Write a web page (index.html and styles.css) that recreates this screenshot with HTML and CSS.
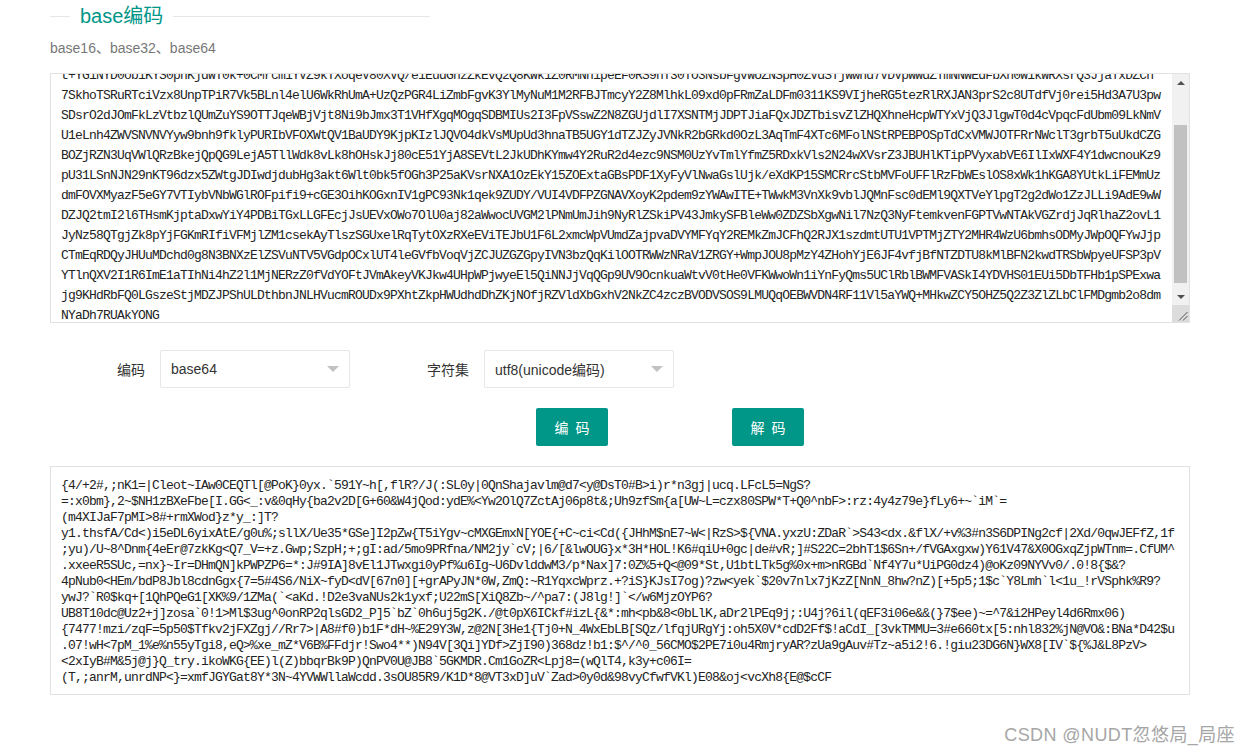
FILE: index.html
```html
<!DOCTYPE html>
<html lang="zh-CN">
<head>
<meta charset="utf-8">
<title>base编码</title>
<link rel="stylesheet" href="styles.css">
</head>
<body>
<main class="page">
  <div class="title"><h1 class="title-text">base编码</h1></div>
  <p class="intro">base16、base32、base64</p>

  <section class="box box-input">
    <div class="pane">
<pre class="code code-input">t+YG1NYD0ob1KYS0phKjdWT0k+0CMrcm1YVZ9kTXoqeV80XVQ/e1EudGhzZkEvQ2Q8KWk1Z0RMNn1peEF0RS9nT30TO3NsbFgvWUZNSpH0ZVdSTjWwnd7VDVpWWdZTmNNWEdFbXh0W1kWRXsrQ3JjaTxDZCh
7SkhoTSRuRTciVzx8UnpTPiR7Vk5BLnl4elU6WkRhUmA+UzQzPGR4LiZmbFgvK3YlMyNuM1M2RFBJTmcyY2Z8MlhkL09xd0pFRmZaLDFm0311KS9VIjheRG5tezRlRXJAN3prS2c8UTdfVj0rei5Hd3A7U3pw
SDsrO2dJOmFkLzVtbzlQUmZuYS9OTTJqeWBjVjt8Ni9bJmx3T1VHfXgqMOgqSDBMIUs2I3FpVSswZ2N8ZGUjdlI7XSNTMjJDPTJiaFQxJDZTbisvZlZHQXhneHcpWTYxVjQ3JlgwT0d4cVpqcFdUbm09LkNmV
U1eLnh4ZWVSNVNVYyw9bnh9fklyPURIbVFOXWtQV1BaUDY9KjpKIzlJQVO4dkVsMUpUd3hnaTB5UGY1dTZJZyJVNkR2bGRkd0OzL3AqTmF4XTc6MFolNStRPEBPOSpTdCxVMWJOTFRrNWclT3grbT5uUkdCZG
BOZjRZN3UqVWlQRzBkejQpQG9LejA5TllWdk8vLk8hOHskJj80cE51YjA8SEVtL2JkUDhKYmw4Y2RuR2d4ezc9NSM0UzYvTmlYfmZ5RDxkVls2N24wXVsrZ3JBUHlKTipPVyxabVE6IlIxWXF4Y1dwcnouKz9
pU31LSnNJN29nKT96dzx5ZWtgJDIwdjdubHg3akt6Wlt0bk5fOGh3P25aKVsrNXA1OzEkY15ZOExtaGBsPDF1XyFyVlNwaGslUjk/eXdKP15SMCRrcStbMVFoUFFlRzFbWEslOS8xWk1hKGA8YUtkLiFEMmUz
dmFOVXMyazF5eGY7VTIybVNbWGlROFpifi9+cGE3OihKOGxnIV1gPC93Nk1qek9ZUDY/VUI4VDFPZGNAVXoyK2pdem9zYWAwITE+TWwkM3VnXk9vblJQMnFsc0dEMl9QXTVeYlpgT2g2dWo1ZzJLLi9AdE9wW
DZJQ2tmI2l6THsmKjptaDxwYiY4PDBiTGxLLGFEcjJsUEVxOWo7OlU0aj82aWwocUVGM2lPNmUmJih9NyRlZSkiPV43JmkySFBleWw0ZDZSbXgwNil7NzQ3NyFtemkvenFGPTVwNTAkVGZrdjJqRlhaZ2ovL1
JyNz58QTgjZk8pYjFGKmRIfiVFMjlZM1csekAyTlszSGUxelRqTytOXzRXeEViTEJbU1F6L2xmcWpVUmdZajpvaDVYMFYqY2REMkZmJCFhQ2RJX1szdmtUTU1VPTMjZTY2MHR4WzU6bmhsODMyJWpOQFYwJjp
CTmEqRDQyJHUuMDchd0g8N3BNXzElZSVuNTV5VGdpOCxlUT4leGVfbVoqVjZCJUZGZGpyIVN3bzQqKilOOTRWWzNRaV1ZRGY+WmpJOU8pMzY4ZHohYjE6JF4vfjBfNTZDTU8kMlBFN2kwdTRSbWpyeUFSP3pV
YTlnQXV2I1R6ImE1aTIhNi4hZ2l1MjNERzZ0fVdYOFtJVmAkeyVKJkw4UHpWPjwyeEl5QiNNJjVqQGp9UV9OcnkuaWtvV0tHe0VFKWwoWn1iYnFyQms5UClRblBWMFVASkI4YDVHS01EUi5DbTFHb1pSPExwa
jg9KHdRbFQ0LGszeStjMDZJPShULDthbnJNLHVucmROUDx9PXhtZkpHWUdhdDhZKjNOfjRZVldXbGxhV2NkZC4zczBVODVSOS9LMUQqOEBWVDN4RF11Vl5aYWQ+MHkwZCY5OHZ5Q2Z3ZlZLbClFMDgmb2o8dm
NYaDh7RUAkYONG</pre>
    </div>
    <div class="scrollbar">
      <div class="sb-button"><span class="sb-up"></span></div>
      <div class="sb-track"><div class="sb-thumb"></div></div>
      <div class="sb-button"><span class="sb-down"></span></div>
      <div class="sb-corner">
        <svg class="grip" width="17" height="17" viewBox="0 0 17 17"><path d="M7 15.5 15.5 7M11 15.5 15.5 11" stroke="#555" stroke-width="1" fill="none"/></svg>
      </div>
    </div>
  </section>

  <form class="options">
    <div class="field">
      <span class="label">编码</span>
      <div class="select"><span>base64</span><i class="caret"></i></div>
    </div>
    <div class="field">
      <span class="label">字符集</span>
      <div class="select"><span>utf8(unicode编码)</span><i class="caret"></i></div>
    </div>
  </form>

  <div class="actions">
    <button class="btn" type="button">编 码</button>
    <button class="btn" type="button">解 码</button>
  </div>

  <section class="box box-output">
<pre class="code code-output">{4/+2#,;nK1=|Cleot~IAw0CEQTl[@PoK}0yx.`591Y~h[,flR?/J(:SL0y|0QnShajavlm@d7&lt;y@DsT0#B&gt;i)r*n3gj|ucq.LFcL5=NgS?
=:x0bm},2~$NH1zBXeFbe[I.GG&lt;_:v&amp;0qHy{ba2v2D[G+60&amp;W4jQod:ydE%&lt;Yw2OlQ7ZctAj06p8t&amp;;Uh9zfSm{a[UW~L=czx80SPW*T+Q0^nbF&gt;:rz:4y4z79e}fLy6+~`iM`=
(m4XIJaF7pMI&gt;8#+rmXWod}z*y_:]T?
y1.thsfA/Cd&lt;)i5eDL6yixAtE/g0u%;sllX/Ue35*GSe]I2pZw{T5iYgv~cMXGEmxN[YOE{+C~ci&lt;Cd({JHhM$nE7~W&lt;|RzS&gt;${VNA.yxzU:ZDaR`&gt;S43&lt;dx.&amp;flX/+v%3#n3S6DPINg2cf|2Xd/0qwJEFfZ,1f
;yu)/U~8^Dnm{4eEr@7zkKg&lt;Q7_V=+z.Gwp;SzpH;+;gI:ad/5mo9PRfna/NM2jy`cV;|6/[&amp;lwOUG}x*3H*HOL!K6#qiU+0gc|de#vR;]#S22C=2bhT1$6Sn+/fVGAxgxw)Y61V47&amp;X0OGxqZjpWTnm=.CfUM^
.xxeeR5SUc,=nx}~Ir=DHmQN]kPWPZP6=*:J#9IA]8vEl1JTwxgi0yPf%u6Ig~U6DvlddwM3/p*Nax]7:0Z%5+Q&lt;@09*St,U1btLTk5g%0x+m&gt;nRGBd`Nf4Y7u*UiPG0dz4)@oKz09NYVv0/.0!8{$&amp;?
4pNub0&lt;HEm/bdP8Jbl8cdnGgx{7=5#4S6/NiX~fyD&lt;dV[67n0][+grAPyJN*0W,ZmQ:~R1YqxcWprz.+?iS}KJsI7og)?zw&lt;yek`$20v7nlx7jKzZ[NnN_8hw?nZ)[+5p5;1$c`Y8Lmh`l&lt;1u_!rVSphk%R9?
ywJ?`R0$kq+[1QhPQeG1[XK%9/1ZMa(`&lt;aKd.!D2e3vaNUs2k1yxf;U22mS[XiQ8Zb~/^pa7:(J8lg!]`&lt;/w6MjzOYP6?
UB8T10dc@Uz2+j]zosa`0!1&gt;Ml$3ug^0onRP2qlsGD2_P]5`bZ`0h6uj5g2K./@t0pX6ICkf#izL{&amp;*:mh&lt;pb&amp;8&lt;0bLlK,aDr2lPEq9j;:U4j?6il(qEF3i06e&amp;&amp;(}7$ee)~=^7&amp;i2HPeyl4d6Rmx06)
{7477!mzi/zqF=5p50$Tfkv2jFXZgj//Rr7&gt;|A8#f0)b1F*dH~%E29Y3W,z@2N[3He1{Tj0+N_4WxEbLB[SQz/lfqjURgYj:oh5X0V*cdD2Ff$!aCdI_[3vkTMMU=3#e660tx[5:nhl832%jN@VO&amp;:BNa*D42$u
.07!wH&lt;7pM_1%e%n55yTgi8,eQ&gt;%xe_mZ*V6B%FFdjr!Swo4**)N94V[3Qi]YDf&gt;ZjI90)368dz!b1:$^/^0_56CMO$2PE7i0u4RmjryAR?zUa9gAuv#Tz~a5i2!6.!giu23DG6N}WX8[IV`${%J&amp;L8PzV&gt;
&lt;2xIyB#M&amp;5j@j}Q_try.ikoWKG{EE)l(Z)bbqrBk9P)QnPV0U@JB8`5GKMDR.Cm1GoZR&lt;Lpj8=(wQlT4,k3y+c06I=
(T,;anrM,unrdNP&lt;}=xmfJGYGat8Y*3N~4YVWWllaWcdd.3sOU85R9/K1D*8@VT3xD]uV`Zad&gt;0y0d&amp;98vyCfwfVKl)E08&amp;oj&lt;vcXh8{E@$cCF</pre>
  </section>
</main>
<div class="watermark">CSDN @NUDT忽悠局_局座</div>
</body>
</html>
```

FILE: styles.css
```css
* { box-sizing: border-box; }

html, body { margin: 0; padding: 0; }

body {
  position: relative;
  height: 753px;
  overflow: hidden;
  background: #fff;
  color: #333;
  font-family: "Liberation Sans", "Noto Sans CJK SC", sans-serif;
  font-size: 14px;
}

.page {
  width: 1140px;
  margin-left: 50px;
  padding-top: 2px;
}

.title {
  display: flex;
  align-items: center;
  width: 380px;
  height: 28px;
}

.title::before,
.title::after {
  content: "";
  height: 1px;
  background: #e6e6e6;
}

.title::before { width: 20px; }
.title::after { flex: 1; }

.title-text {
  margin: 0;
  padding: 0 10px;
  color: #009688;
  font-size: 20px;
  font-weight: 400;
  line-height: 28px;
}

.intro {
  margin: 8px 0 0;
  color: #777;
  font-size: 14px;
  line-height: 20px;
  height: 35px;
}

.box {
  border: 1px solid #e2e2e2;
  background: #fff;
  overflow: hidden;
}

.box-input {
  display: flex;
  height: 250px;
}

.pane {
  flex: 1;
  min-width: 0;
  overflow: hidden;
}

.code {
  margin: 0;
  padding: 0 0 0 10px;
  color: #222;
  font-family: "Liberation Mono", monospace;
  font-size: 13px;
  letter-spacing: -0.8px;
  white-space: pre;
}

.code-input {
  margin-top: -8px;
  line-height: 20px;
}

.scrollbar {
  display: flex;
  flex-direction: column;
  width: 17px;
  flex: none;
  background: #f1f1f1;
}

.sb-button {
  display: flex;
  align-items: center;
  justify-content: center;
  height: 17px;
  flex: none;
}

.sb-up,
.sb-down {
  width: 0;
  height: 0;
  border-left: 4px solid transparent;
  border-right: 4px solid transparent;
}

.sb-up { border-bottom: 4px solid #505050; }
.sb-down { border-top: 4px solid #505050; }

.sb-track {
  flex: 1;
  padding: 34px 2px 0;
}

.sb-thumb {
  height: 158px;
  background: #c1c1c1;
}

.sb-corner {
  height: 17px;
  flex: none;
  background: #dcdcdc;
}

.grip { display: block; }

.options {
  display: flex;
  gap: 24px;
  margin: 27px 0 0;
}

.field {
  display: flex;
  align-items: center;
  width: 300px;
}

.label {
  width: 110px;
  padding-right: 15px;
  text-align: right;
  color: #333;
}

.select {
  position: relative;
  display: flex;
  align-items: center;
  width: 190px;
  height: 38px;
  padding-left: 10px;
  border: 1px solid #e6e6e6;
  border-radius: 2px;
  background: #fff;
}

.caret {
  position: absolute;
  right: 10px;
  top: 15px;
  width: 0;
  height: 0;
  border-left: 6px solid transparent;
  border-right: 6px solid transparent;
  border-top: 6px solid #c2c2c2;
}

.actions {
  display: flex;
  gap: 124px;
  margin-top: 20px;
  padding-left: 486px;
}

.btn {
  width: 72px;
  height: 38px;
  padding: 0;
  border: 0;
  border-radius: 2px;
  background: #009688;
  color: #fff;
  font: 14px "Liberation Sans", "Noto Sans CJK SC", sans-serif;
  word-spacing: 3px;
}

.box-output {
  height: 229px;
  margin-top: 20px;
  padding-top: 11px;
}

.code-output { line-height: 16px; }

.watermark {
  position: absolute;
  right: 16px;
  top: 723px;
  color: #a6a6a6;
  font-size: 18px;
  letter-spacing: 0.4px;
  line-height: 24px;
}
```
